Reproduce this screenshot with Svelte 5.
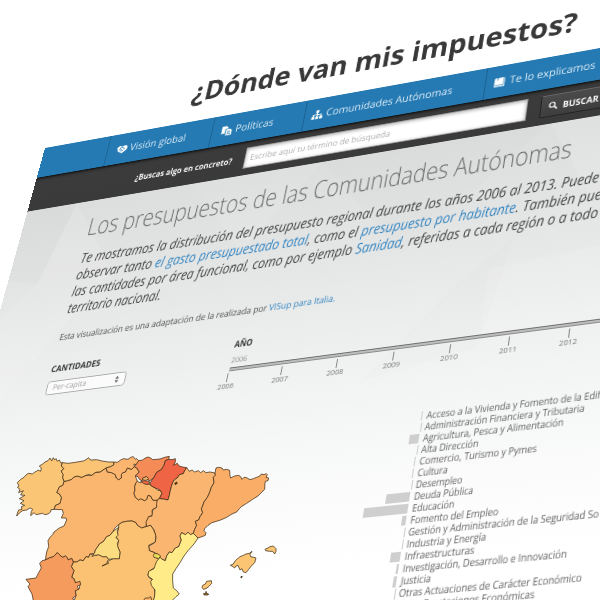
<script>
  const navItems = [
    { label: 'Visión global', width: 63, col: 119, pad: 9.2, icon: 'hands' },
    { label: 'Políticas', width: 42, col: 101.4, pad: 9.4, icon: 'copy' },
    { label: 'Comunidades Autónomas', width: 132, col: 189, pad: 6.8, icon: 'sitemap' },
    { label: 'Te lo explicamos', width: 84.8, col: 272, pad: 7.6, icon: 'book' }
  ];

  const years = [2006, 2007, 2008, 2009, 2010, 2011, 2012];

  const policies = [
    { name: 'Acceso a la Vivienda y Fomento de la Edif', width: 157, bar: 1.3 },
    { name: 'Administración Financiera y Tributaria', width: 144.2, bar: 0.6 },
    { name: 'Agricultura, Pesca y Alimentación', width: 127, bar: 9.6 },
    { name: 'Alta Dirección', width: 52.3, bar: 0.6 },
    { name: 'Comercio, Turismo y Pymes', width: 105.7, bar: 1.6 },
    { name: 'Cultura', width: 27.9, bar: 1.3 },
    { name: 'Desempleo', width: 42.7, bar: 0.8 },
    { name: 'Deuda Pública', width: 54, bar: 22 },
    { name: 'Educación', width: 38.5, bar: 41 },
    { name: 'Fomento del Empleo', width: 78.7, bar: 4.2 },
    { name: 'Gestión y Administración de la Seguridad So', width: 167, bar: 0.8 },
    { name: 'Industria y Energía', width: 71, bar: 0.8 },
    { name: 'Infraestructuras', width: 61.8, bar: 9.8 },
    { name: 'Investigación, Desarrollo e Innovación', width: 143.5, bar: 2.2 },
    { name: 'Justicia', width: 27, bar: 3.2 },
    { name: 'Otras Actuaciones de Carácter Económico', width: 158.6, bar: 0.8 },
    { name: 'Otras Prestaciones Económicas', width: 120, bar: 0.8 }
  ];

  const regions = [
    { id: 'castilla-leon', fill: '#fab56e', d: '192,124 203,122 215,118 222,111 232,108 245,112 258,106 275,106 285,98 300,96 318,84 322,96 335,98 346,104 349,114 356,119 364,114 364,104 368,98 376,96 382,84 395,88 403,80 410,84 418,96 406,108 412,124 408,128 404,140 405,150 402,160 406,172 416,180 422,176 434,182 440,178 444,166 452,168 458,180 466,181 472,180 472,190 470,202 458,208 456,212 458,226 446,230 440,246 438,260 425,264 412,256 408,248 396,243 380,244 366,247 356,254 345,264 338,276 330,286 320,290 310,305 298,312 295,318 286,330 284,340 270,342 266,352 258,350 250,362 240,360 230,366 220,366 215,355 205,360 201,352 196,348 188,352 180,346 172,338 160,350 148,354 136,360 140,336 146,320 144,302 150,292 158,284 162,276 178,264 192,258 200,240 198,234 184,234 190,220 187,209 162,208 166,196 180,190 182,182 184,172 178,162 170,158 178,140 188,136' },
    { id: 'galicia', fill: '#fbc576', d: '187,68 182,68 178,60 172,64 168,56 164,60 160,53 155,63 150,54 144,62 135,66 128,72 118,78 124,84 122,94 114,90 110,94 104,96 98,102 85,100 78,105 72,112 62,118 52,128 57,138 52,142 60,148 56,158 70,152 62,165 75,166 58,176 72,182 61,190 74,196 64,200 66,208 56,210 52,220 50,228 58,219 68,212 80,210 90,204 98,208 94,214 92,227 102,218 108,224 128,220 134,224 144,222 152,216 153,209 162,208 166,196 180,190 182,182 184,172 178,162 170,158 178,140 188,136 192,124 188,112 190,104 186,98 184,92 192,86 184,78' },
    { id: 'asturias', fill: '#fbc374', d: '187,68 205,70 226,67 250,63 258,59 266,53 270,59 275,60 290,59 306,63 325,66 341,66 342,74 332,80 318,84 300,96 292,96 285,98 275,106 268,103 258,106 245,112 232,108 222,111 215,118 203,122 192,124 188,112 190,104 186,98 184,92 192,86 184,78' },
    { id: 'cantabria', fill: '#fbb56e', d: '341,66 352,67 362,60 370,56 384,58 392,52 400,50 406,58 410,56 416,62 416,68 408,74 402,72 403,80 395,88 382,84 376,96 368,98 364,104 364,114 356,119 349,114 346,104 335,98 322,96 318,84 332,80 342,74' },
    { id: 'rioja', fill: '#fbb66d', d: '412,124 420,128 428,124 436,132 448,132 454,138 466,144 474,152 480,150 486,160 478,176 472,180 466,181 458,180 452,168 444,166 440,178 434,182 422,176 416,180 406,172 402,160 405,150 404,140 408,128' },
    { id: 'pais-vasco', fill: '#f58c57', d: '416,62 428,60 436,54 445,51 455,56 458,59 470,58 480,57 494,52 508,49 506,58 496,62 492,76 485,88 470,97 462,112 450,122 444,120 440,110 430,114 426,122 418,118 414,110 406,108 418,96 410,84 403,80 408,74' },
    { id: 'trevino', fill: '#fab56e', d: '428,114 440,110 446,116 438,121 428,120' },
    { id: 'vasco-sur', fill: '#ee6945', d: '422,124 434,122 448,124 448,132 438,133 430,130' },
    { id: 'navarra', fill: '#ef6444', d: '496,62 506,58 516,59 526,56 526,66 520,76 532,70 537,78 548,81 560,83 554,92 550,101 538,104 532,114 524,118 518,128 514,140 510,156 508,166 504,180 490,177 478,176 482,168 486,160 480,150 466,144 454,138 450,130 456,120 462,112 470,97 485,88 492,76' },
    { id: 'aragon', fill: '#fab570', d: '560,83 568,94 576,90 584,96 595,92 602,98 610,92 618,98 630,96 645,99 646,106 640,112 642,128 634,142 630,154 626,164 622,172 612,186 608,198 604,206 608,218 600,230 596,240 586,244 590,256 584,268 580,280 572,284 564,277 556,284 545,278 540,288 544,300 536,320 526,324 516,338 508,336 500,348 496,362 486,358 480,352 474,344 464,338 448,332 446,318 458,312 466,306 468,290 462,270 452,256 440,260 438,246 446,230 456,228 458,210 470,202 470,190 472,180 478,176 490,177 504,180 508,166 510,156 514,140 518,128 524,118 532,114 538,104 550,101 554,92' },
    { id: 'aragon-enclave', fill: '#4a3512', d: '524,130 530,126 532,130 526,134' },
    { id: 'cataluna', fill: '#f9ad67', d: '645,99 648,84 656,82 666,84 670,90 680,88 689,91 690,108 692,114 704,108 716,106 722,110 726,118 732,112 740,113 750,119 760,116 770,112 780,108 784,102 792,104 799,101 802,104 798,112 806,114 804,122 796,124 795,130 794,148 786,156 774,168 758,178 740,190 724,200 718,206 710,216 696,222 680,232 662,240 636,248 624,256 614,266 612,272 618,278 616,286 606,290 594,294 588,288 580,280 584,268 590,256 586,244 596,240 600,230 608,218 604,206 608,198 612,186 622,172 626,164 630,154 634,142 642,128 640,112 646,106' },
    { id: 'mancha', fill: '#fbc273', d: '220,366 230,366 240,360 250,362 258,350 266,352 270,342 284,346 296,344 308,350 320,350 326,358 322,364 326,370 306,378 318,372 326,362 340,356 358,356 360,336 352,318 356,302 348,290 352,280 356,262 356,254 366,247 380,244 396,243 408,248 412,256 425,264 438,260 452,256 460,268 467,285 466,306 446,316 448,332 464,338 468,352 478,360 470,366 466,382 452,390 444,402 446,412 456,418 458,430 462,440 465,460 462,482 222,482 228,468 226,452 238,446 240,432 226,428 222,416 215,412 222,392 214,380' },
    { id: 'extremadura', fill: '#f59b5e', d: '136,360 148,354 160,350 172,338 180,346 188,352 196,348 201,352 205,360 215,355 220,366 214,380 222,392 215,412 222,416 226,428 240,424 242,434 232,438 236,448 226,452 228,468 218,474 222,482 100,482 96,462 84,440 90,432 84,426 78,418 108,414 116,398 124,384 119,370 126,362' },
    { id: 'madrid', fill: '#fcdc80', d: '356,262 352,274 354,286 348,292 356,302 352,310 354,322 360,336 358,356 340,356 326,358 320,350 308,350 296,344 284,346 276,350 284,338 286,330 295,318 298,312 310,305 320,290 330,286 338,276 345,270' },
    { id: 'valencia', fill: '#ffec88', d: '540,288 545,278 556,284 564,277 572,284 580,280 588,288 594,294 582,312 564,332 552,348 540,368 528,386 518,402 518,424 520,444 530,452 538,462 528,470 516,482 460,482 464,468 465,450 454,436 452,424 458,418 444,408 446,394 462,386 466,374 470,364 480,352 486,358 496,362 500,348 508,336 516,338 526,324 536,320 544,300' },
    { id: 'rincon', fill: '#e8de58', d: '460,346 464,340 474,342 482,348 476,356 462,352' },
    { id: 'mancha-sur', fill: '#fbb56e', d: '430,482 436,474 446,474 452,470 456,482' },
    { id: 'mallorca', fill: '#fbc574', d: '691,376 700,372 706,362 720,350 730,346 738,342 748,340 756,334 750,344 752,350 762,352 768,354 764,368 754,378 746,388 738,398 730,396 726,386 720,390 714,376 708,378 704,384 696,378' },
    { id: 'menorca', fill: '#fbc574', d: '795,328 804,324 810,320 820,318 828,326 828,334 824,342 818,334 808,334 797,332' },
    { id: 'ibiza', fill: '#fbc574', d: '606,442 608,436 616,432 620,424 634,422 635,430 628,438 618,446 610,448' },
    { id: 'formentera', fill: '#b07a2c', d: '611,460 616,462 618,454 620,460 626,462 624,465 612,465' },
    { id: 'cabrera', fill: '#222222', d: '722,412 725,408 727,410 724,414' }
  ];

  // Condenses a line of text horizontally so that it occupies the given width.
  function fit(node, width) {
    const natural = node.offsetWidth;
    node.style.transform = `scaleX(${width / natural})`;
    node.style.marginRight = `${width - natural}px`;
  }
</script>

<main class="stage">
  <div class="page">
    <header class="brand">
      <h1><span class="fit" use:fit={410.5}>¿Dónde van mis impuestos?</span></h1>
    </header>

    <nav class="nav">
      {#each navItems as item}
        <a class="nav-item" style="width: {item.col}px; padding-left: {item.pad}px">
          <svg class="nav-icon" viewBox="0 0 16 16" aria-hidden="true">
            {#if item.icon === 'hands'}
              <path d="M1 5 4 2.500l3 .5 1.500 1L10 3l3.500-.5L15.600 5.500l-.8 4L8.800 14 2.500 10z" fill="#fff" />
              <path d="M4.500 8.500 6.500 5l3 .5M9.500 5.500l2.500 3M5 8.500l2 .5 1.500-1.500M7 11l3-1" stroke="#257ab3" stroke-width="1.200" fill="none" />
            {:else if item.icon === 'copy'}
              <path d="M1 1h6l2.500 2.500v1.300H5.800V12H1z" fill="#fff" />
              <path d="M7 5.800h5.500L15 8.300V15H7z" fill="#fff" />
              <path d="M8.500 9h4M8.500 11h5M8.500 13h5" stroke="#257ab3" stroke-width=".9" fill="none" />
            {:else if item.icon === 'sitemap'}
              <path d="M6 1.500h4v4H6zM.8 10.500h4v4h-4zM6 10.500h4v4H6zM11.200 10.500h4v4h-4z" fill="#fff" />
              <path d="M8 5v6M2.800 11V8h10.400v3" stroke="#fff" stroke-width="1.300" fill="none" />
            {:else}
              <path d="M2 2h1.500v8.500H13V2h2v12H2z" fill="#fff" />
              <path d="M3 1.500h10.500v9.500H3z" fill="#fff" />
              <path d="M13.600 2v10H3" stroke="#257ab3" stroke-width=".9" fill="none" />
              <path d="M4.600 1v4.200l1.400-1 1.400 1V1z" fill="#257ab3" opacity=".45" />
            {/if}
          </svg>
          <span class="fit" use:fit={item.width}>{item.label}</span>
        </a>
      {/each}
    </nav>

    <form class="search">
      <label class="search-label" for="q"><span class="fit" use:fit={108.4}>¿Buscas algo en concreto?</span></label>
      <div class="search-field" id="q"><span class="fit" use:fit={148.6}>Escribe aquí tu término de búsqueda</span></div>
      <div class="search-button">
        <svg viewBox="0 0 12 12" aria-hidden="true">
          <circle cx="4.600" cy="4.600" r="3.300" fill="none" stroke="#fff" stroke-width="1.500" />
          <path d="M7 7l4 4" stroke="#fff" stroke-width="2" />
        </svg>
        <span class="fit" use:fit={35}>BUSCAR</span>
      </div>
    </form>

    <section class="content">
      <svg class="facets" viewBox="0 0 760 520" aria-hidden="true">
        <polygon points="0,0 58,0 36,92 0,82" fill="#000" opacity=".012" />
        <polygon points="58,0 36,92 0,130 0,260 120,90" fill="#fff" opacity=".1" />
        <polygon points="190,0 330,0 260,90" fill="#fff" opacity=".08" />
        <polygon points="330,0 560,0 430,120" fill="#000" opacity=".006" />
        <polygon points="560,0 760,0 760,110 610,90" fill="#fff" opacity=".1" />
        <polygon points="490,160 540,120 520,230 410,250" fill="#000" opacity=".008" />
        <polygon points="520,150 760,130 760,230 520,220" fill="#fff" opacity=".12" />
      </svg>

      <div class="body">
        <h2><span class="fit" use:fit={506}>Los presupuestos de las Comunidades Autónomas</span></h2>
        <div class="intro">
          <div><span class="fit" use:fit={534.5}>Te mostramos la distribución del presupuesto regional durante los años 2006 al 2013. Puede</span></div>
          <div><span class="fit" use:fit={538.5}>observar tanto <a>el gasto presupuestado total</a>, como el <a>presupuesto por habitante</a>. También pue</span></div>
          <div><span class="fit" use:fit={537}>las cantidades por área funcional, como por ejemplo <a>Sanidad</a>, referidas a cada región o a todo</span></div>
          <div><span class="fit" use:fit={102.5}>territorio nacional.</span></div>
        </div>
        <p class="credit"><span class="fit" use:fit={291.8}>Esta visualización es una adaptación de la realizada por <a>VISup para Italia.</a></span></p>

        <div class="controls">
          <div class="amounts">
            <div class="caption"><span class="fit" use:fit={53.6}>CANTIDADES</span></div>
            <div class="select">
              <span class="fit" use:fit={36.5}>Per-capita</span>
              <svg viewBox="0 0 6 10" aria-hidden="true"><path d="M.6 4 3 .5 5.400 4zM.6 6 3 9.500 5.400 6z" fill="#666" /></svg>
            </div>
          </div>
          <div class="timeline">
            <div class="caption"><span class="fit" use:fit={18.6}>AÑO</span></div>
            <div class="current"><span class="fit" use:fit={16}>2006</span></div>
            <div class="track"></div>
            <div class="ticks">
              {#each years as year}
                <div class="tick"><i></i><span>{year}</span></div>
              {/each}
            </div>
          </div>
        </div>

        <div class="chart">
          {#each policies as policy}
            <div class="row">
              <div class="bar-cell"><div class="bar" style="width: {policy.bar}px"></div></div>
              <span class="fit" use:fit={policy.width}>{policy.name}</span>
            </div>
          {/each}
        </div>
      </div>
    </section>
  </div>

  <svg class="map" viewBox="0 0 600 600" role="img" aria-label="Mapa de España por comunidades">
    <g transform="translate(0 440) scale(.33333)">
      {#each regions as region (region.id)}
        <polygon points={region.d} fill={region.fill} />
      {/each}
    </g>
  </svg>
</main>

<style>
  .stage {
    display: grid;
    width: 600px;
    height: 600px;
    overflow: hidden;
    background: #fff;
    font-family: 'Open Sans', 'Noto Sans', sans-serif;
    color: #444;
  }

  .page {
    grid-area: 1 / 1;
    width: 760px;
    height: 690px;
    transform-origin: 0 0;
    transform: matrix3d(0.82655, -0.17455, 0, -0.00016408, -0.2317, 0.76676, 0, -0.00022874, 0, 0, 1, 0, 45, 148, 0, 1) translateY(-90px);
  }

  .map {
    grid-area: 1 / 1;
    width: 600px;
    height: 600px;
    z-index: 1;
  }

  .map polygon {
    stroke: #3c2c14;
    stroke-width: 2.6;
    stroke-opacity: 0.85;
    stroke-linejoin: round;
  }

  .fit {
    display: inline-block;
    flex: none;
    white-space: nowrap;
    transform-origin: 0 50%;
  }

  h1,
  h2,
  p {
    margin: 0;
  }

  a {
    color: #2f83c0;
    text-decoration: none;
  }

  .brand {
    box-sizing: border-box;
    height: 90px;
    padding: 32.5px 0 0 164px;
  }

  h1 {
    font-size: 32.5px;
    line-height: 40px;
    font-weight: 700;
    color: #393939;
  }

  .nav {
    display: flex;
    height: 37px;
    padding-left: 78.4px;
    background: #257ab3;
  }

  .nav-item {
    box-sizing: border-box;
    flex: none;
    display: flex;
    align-items: center;
    gap: 3.2px;
    height: 37px;
    padding-top: 1px;
    border-left: 1px solid #1b6191;
    font-size: 12px;
    line-height: 16px;
    color: #e4f1fa;
  }

  .nav-icon {
    flex: none;
    width: 13px;
    height: 13px;
  }

  .search {
    display: flex;
    align-items: center;
    height: 41px;
    background: linear-gradient(#101010, #333 3px, #3b3b3b 6px, #3a3a3a);
  }

  .search-label {
    width: 122.3px;
    padding-left: 120.2px;
    font-size: 10px;
    line-height: 14px;
    font-weight: 700;
    color: #fff;
  }

  .search-field {
    box-sizing: border-box;
    width: 293px;
    height: 25.5px;
    padding: 5.2px 0 0 4.5px;
    border: 1px solid #999;
    background: #fff;
    box-shadow: inset 0 1px 4px rgba(0, 0, 0, 0.35);
    font-size: 9.5px;
    line-height: 14px;
    color: #aaa;
  }

  .search-button {
    box-sizing: border-box;
    display: flex;
    align-items: center;
    gap: 4px;
    width: 90px;
    height: 25.5px;
    margin-left: 12.2px;
    padding-left: 7.5px;
    border: 1px solid #222;
    border-top-color: #686868;
    border-radius: 2px;
    background: linear-gradient(#4b4b4b, #3e3e3e);
    font-size: 10px;
    font-weight: 700;
    color: #fff;
  }

  .search-button svg {
    width: 9.5px;
    height: 9.5px;
  }

  .content {
    display: grid;
    height: 522px;
    background: linear-gradient(#dcdddd, #e2e3e3 80px, #e9eaea 160px, #f0f1f1 230px, #f6f7f7 300px, #fcfcfc 370px, #fff 430px);
  }

  .facets {
    grid-area: 1 / 1;
    width: 760px;
    height: 520px;
  }

  .body {
    grid-area: 1 / 1;
    padding: 12.4px 0 0 78.5px;
  }

  h2 {
    height: 38px;
    font-size: 28px;
    line-height: 38px;
    font-weight: 300;
    color: #6c6c6c;
  }

  .intro {
    margin-top: 9.1px;
    padding-left: 1px;
    font-size: 15.5px;
    line-height: 18.85px;
    font-style: italic;
    color: #404040;
  }

  .intro div {
    height: 18.85px;
  }

  .credit {
    height: 14px;
    margin-top: 15.9px;
    font-size: 9.8px;
    line-height: 14px;
    color: #4d4d4d;
  }

  .controls {
    display: grid;
    grid-template-columns: 196px 1fr;
    margin-top: 22px;
  }

  .caption {
    height: 12px;
    font-size: 9.5px;
    line-height: 12px;
    font-weight: 700;
    color: #333;
  }

  .select {
    box-sizing: border-box;
    display: flex;
    align-items: center;
    justify-content: space-between;
    width: 86px;
    height: 15px;
    margin-top: 7px;
    padding: 0 6px;
    border: 1px solid #aaa;
    border-radius: 3.5px;
    background: #fbfbfb;
    font-size: 8.5px;
    line-height: 12px;
    color: #999;
  }

  .select svg {
    width: 5px;
    height: 9px;
  }

  .current {
    height: 9px;
    margin-top: 6.3px;
    font-size: 7.5px;
    line-height: 9px;
    color: #888;
  }

  .track {
    box-sizing: border-box;
    height: 4.2px;
    margin-top: 2.9px;
    border-top: 1.3px solid #6e6e6e;
    border-bottom: 1px solid #8c8c8c;
    background: #bdbdbd;
  }

  .ticks {
    display: flex;
    margin: 2.2px 0 0 -27.4px;
  }

  .tick {
    flex: none;
    display: flex;
    flex-direction: column;
    align-items: center;
    width: 54.83px;
    font-size: 7.2px;
    line-height: 9px;
    color: #777;
  }

  .tick i {
    width: 0.8px;
    height: 8.6px;
    background: #888;
  }

  .chart {
    margin: 44.8px 0 0 338.8px;
  }

  .row {
    display: flex;
    align-items: center;
    gap: 4px;
    height: 11.05px;
    font-size: 9.8px;
    line-height: 11px;
    color: #5c5c5c;
  }

  .bar-cell {
    flex: none;
    display: flex;
    justify-content: flex-end;
    width: 60px;
  }

  .bar {
    height: 9.3px;
    background: #cfcfcf;
  }
</style>
